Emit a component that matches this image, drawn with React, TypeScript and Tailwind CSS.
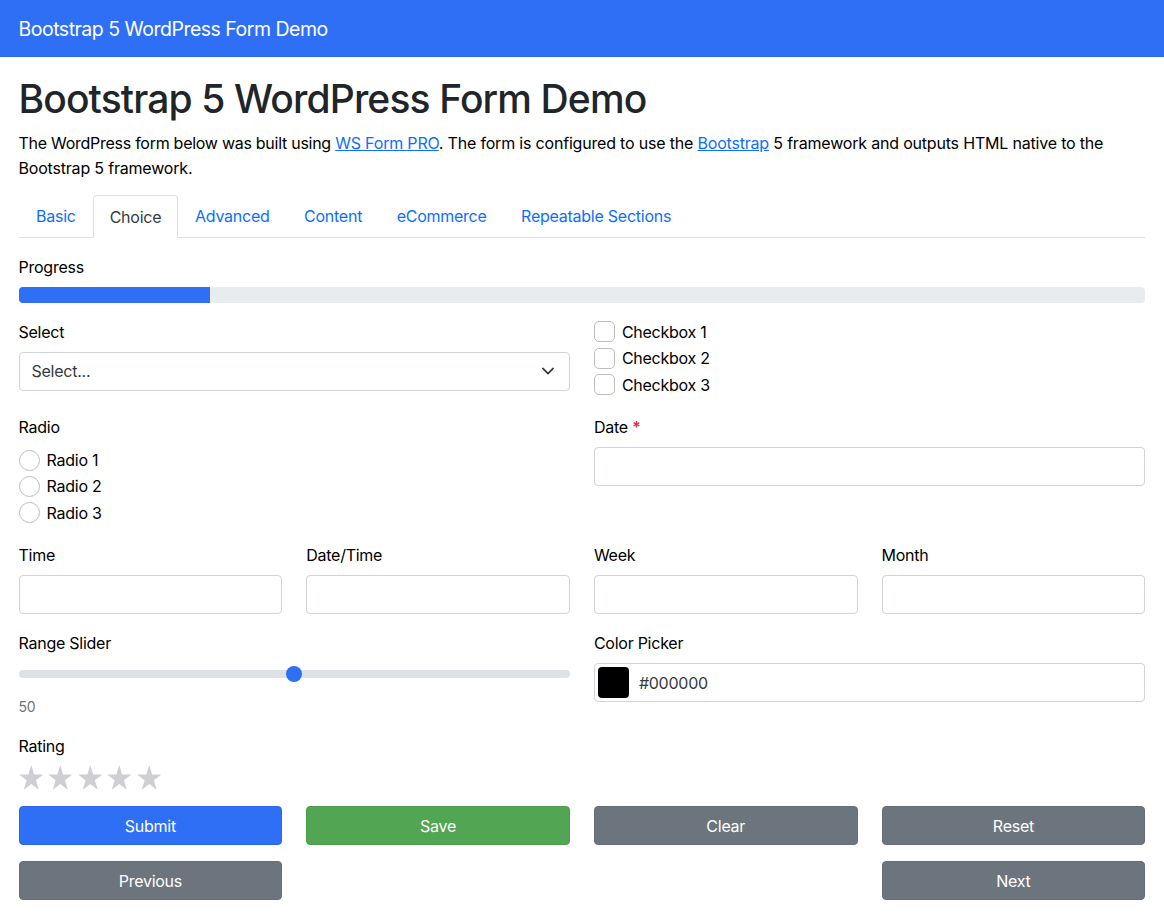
import React from "react";

const inputCls = "block w-full h-[39px] rounded-[4px] border border-[#ced4da] bg-white";

function Label({ children }: { children: React.ReactNode }) {
  return <label className="block h-[24px] leading-[24px] mb-[8px] text-[16px] text-black">{children}</label>;
}

function Field({ label }: { label: React.ReactNode }) {
  return (
    <div>
      <Label>{label}</Label>
      <div className={inputCls} />
    </div>
  );
}

function Check({ label, round }: { label: string; round?: boolean }) {
  return (
    <div className="flex items-center h-[26.4px] text-[16px] text-black">
      <span className={`w-[21px] h-[21px] border border-[#bdbdbd] bg-white mr-[7px] ${round ? "rounded-full" : "rounded-[5px]"}`} />
      <span>{label}</span>
    </div>
  );
}

function Btn({ children, color }: { children: string; color: "blue" | "green" | "gray" }) {
  const cls =
    color === "blue"
      ? "bg-[#2f6ff5] border-[#2b68e8]"
      : color === "green"
      ? "bg-[#52a552] border-[#4c9c4c]"
      : "bg-[#6c757d] border-[#666e76]";
  return (
    <button className={`block w-full h-[39px] rounded-[4px] border text-white text-[16px] text-center ${cls}`}>
      {children}
    </button>
  );
}

function Star() {
  return (
    <svg width="24.5" height="25" viewBox="0.5 0.5 23 22" className="block shrink-0 mr-[5.1px]" preserveAspectRatio="none">
      <path d="M12 0.6L14.69 8.89H23.41L16.36 14.02L19.05 22.31L12 17.18L4.95 22.31L7.64 14.02L0.59 8.89H9.31Z" fill="#cfcfd3" />
    </svg>
  );
}

export default function App() {
  return (
    <div className="bg-white min-h-[920px] text-[#000] tracking-[-0.25px]" style={{ fontFamily: "Inter, 'Liberation Sans', sans-serif" }}>
      <div className="h-[57px] bg-[#2f6ff5] border-b border-[#2b68e8] flex items-center px-[18.5px] pt-[3px] text-white text-[19.5px] tracking-[-0.5px]">
        Bootstrap 5 WordPress Form Demo
      </div>
      <div className="pl-[18.5px] pr-[18.75px]">
        <h1 className="mt-[18px] text-[39px] leading-[48px] font-medium text-[#212529] tracking-[-0.87px]">Bootstrap 5 WordPress Form Demo</h1>
        <p className="mt-[8px] text-[16px] leading-[25px] text-black tracking-[-0.27px]">
          The WordPress form below was built using{" "}
          <span className="tracking-[-0.19px]">
            <a className="text-[#0d6efd] underline">WS Form PRO</a>. The form is configured to use the{" "}
            <a className="text-[#0d6efd] underline">Bootstrap</a> 5 framework and outputs HTML native to the Bootstrap 5
            framework.
          </span>
        </p>
        <div className="mt-[14px] flex h-[43px] border-b border-[#dee2e6] text-[16px]">
          <a className="px-[17.5px] pt-[9px] h-[43px] text-[#0d6efd]">Basic</a>
          <a className="px-[15.5px] pt-[9px] h-[43px] text-[#343a40] bg-white border border-[#dee2e6] border-b-white rounded-t-[4px]">
            Choice
          </a>
          <a className="px-[17.25px] pt-[9px] h-[43px] text-[#0d6efd]">Advanced</a>
          <a className="px-[17.25px] pt-[9px] h-[43px] text-[#0d6efd]">Content</a>
          <a className="px-[17.25px] pt-[9px] h-[43px] text-[#0d6efd]">eCommerce</a>
          <a className="px-[17.25px] pt-[9px] h-[43px] text-[#0d6efd]">Repeatable Sections</a>
        </div>

        <div className="mt-[17px]">
          <Label>Progress</Label>
          <div className="h-[16px] rounded-[4px] bg-[#e9ecef] overflow-hidden">
            <div className="h-full w-[17%] bg-[#2f6ff5]" />
          </div>
        </div>

        <div className="mt-[17px] grid grid-cols-2 gap-x-[24px]">
          <div>
            <Label>Select</Label>
            <div className="flex items-center justify-between h-[38.5px] rounded-[4px] border border-[#ced4da] pl-[12px] pr-[13px] text-[#343a40]">
              <span>Select...</span>
              <svg width="16" height="16" viewBox="0 0 16 16" fill="none" stroke="#343a40" strokeWidth="2" strokeLinecap="round" strokeLinejoin="round" className="scale-[0.85]">
                <path d="M2 5l6 6 6-6" />
              </svg>
            </div>
          </div>
          <div className="-mt-[1.3px]">
            <Check label="Checkbox 1" />
            <Check label="Checkbox 2" />
            <Check label="Checkbox 3" />
          </div>
        </div>

        <div className="mt-[17px] grid grid-cols-2 gap-x-[24px]">
          <div>
            <Label>Radio</Label>
            <Check round label="Radio 1" />
            <Check round label="Radio 2" />
            <Check round label="Radio 3" />
          </div>
          <Field label={<>Date <span className="text-[#dc3545] font-bold">*</span></>} />
        </div>

        <div className="mt-[17px] grid grid-cols-4 gap-x-[24px]">
          <Field label="Time" />
          <Field label="Date/Time" />
          <Field label="Week" />
          <Field label="Month" />
        </div>

        <div className="mt-[17px] grid grid-cols-2 gap-x-[24px]">
          <div>
            <Label>Range Slider</Label>
            <div className="relative mt-[15px] h-[8px] rounded-full bg-[#dee2e6]">
              <span className="absolute left-[267px] -top-[4px] w-[16px] h-[16px] rounded-full bg-[#2f6ff5]" />
            </div>
            <div className="mt-[18px] h-[21px] leading-[21px] text-[14px] text-[#6c757d]">50</div>
          </div>
          <div>
            <Label>Color Picker</Label>
            <div className="flex items-center h-[39px] rounded-[4px] border border-[#ced4da] pl-[3px] text-[#343a40]">
              <span className="w-[31px] h-[31px] rounded-[4px] bg-black" />
              <span className="ml-[10px]">#000000</span>
            </div>
          </div>
        </div>

        <div className="mt-[17px]">
          <Label>Rating</Label>
          <div className="flex -mt-[1px]">
            <Star />
            <Star />
            <Star />
            <Star />
            <Star />
          </div>
        </div>

        <div className="mt-[16px] grid grid-cols-4 gap-x-[24px] gap-y-[16px]">
          <Btn color="blue">Submit</Btn>
          <Btn color="green">Save</Btn>
          <Btn color="gray">Clear</Btn>
          <Btn color="gray">Reset</Btn>
          <Btn color="gray">Previous</Btn>
          <div />
          <div />
          <Btn color="gray">Next</Btn>
        </div>
      </div>
    </div>
  );
}
